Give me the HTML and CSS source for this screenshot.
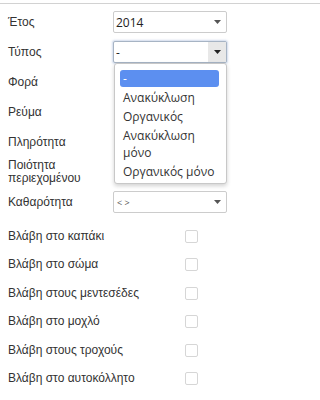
FILE: index.html
```
<!DOCTYPE html>
<html lang="el">
<head>
<meta charset="utf-8">
<title>Φίλτρα</title>
<link rel="stylesheet" href="styles.css">
</head>
<body>
<div class="topline"></div>
<div class="form">
  <div class="row">
    <div class="label">Έτος</div>
    <div class="select"><span class="value">2014</span><span class="arrow"><svg width="7" height="4" viewBox="0 0 7 4"><path d="M0 0h7L3.5 4z" fill="#555"/></svg></span></div>
  </div>
  <div class="row">
    <div class="label">Τύπος</div>
    <div class="select focus"><span class="value">-</span><span class="arrow"><svg width="7" height="4" viewBox="0 0 7 4"><path d="M0 0h7L3.5 4z" fill="#222"/></svg></span></div>
  </div>
  <div class="row"><div class="label">Φορά</div></div>
  <div class="row"><div class="label">Ρεύμα</div></div>
  <div class="row"><div class="label">Πληρότητα</div></div>
  <div class="row"><div class="label">Ποιότητα περιεχομένου</div></div>
  <div class="row">
    <div class="label">Καθαρότητα</div>
    <div class="select"><span class="value small">&lt; &gt;</span><span class="arrow"><svg width="7" height="4" viewBox="0 0 7 4"><path d="M0 0h7L3.5 4z" fill="#555"/></svg></span></div>
  </div>
  <div class="checks">
    <label class="crow"><span class="label">Βλάβη στο καπάκι</span><input type="checkbox" class="box"></label>
    <label class="crow"><span class="label">Βλάβη στο σώμα</span><input type="checkbox" class="box"></label>
    <label class="crow"><span class="label">Βλάβη στους μεντεσέδες</span><input type="checkbox" class="box"></label>
    <label class="crow"><span class="label">Βλάβη στο μοχλό</span><input type="checkbox" class="box"></label>
    <label class="crow"><span class="label">Βλάβη στους τροχούς</span><input type="checkbox" class="box"></label>
    <label class="crow"><span class="label">Βλάβη στο αυτοκόλλητο</span><input type="checkbox" class="box"></label>
  </div>
</div>
<ul class="dropdown">
  <li class="item active">-</li>
  <li class="item">Ανακύκλωση</li>
  <li class="item">Οργανικός</li>
  <li class="item">Ανακύκλωση μόνο</li>
  <li class="item">Οργανικός μόνο</li>
</ul>
</body>
</html>
```
FILE: styles.css
```
html, body {
  margin: 0;
  padding: 0;
  background: #fff;
}
body {
  font-family: "Liberation Sans", Arial, sans-serif;
  font-size: 12px;
  color: #333;
  position: relative;
}
.topline {
  margin-top: 3px;
  border-top: 1px solid #d2d2d2;
}
.form {
  padding: 3px 8px 0 8px;
}
.row {
  display: grid;
  grid-template-columns: 105px 114px;
  align-items: center;
  height: 30px;
}
.label {
  line-height: 13px;
  color: #333;
}
.select {
  box-sizing: border-box;
  height: 22px;
  border: 1px solid #ccc;
  border-radius: 2px;
  background: #fff;
  display: flex;
  align-items: center;
  justify-content: space-between;
  font-family: "Open Sans", sans-serif;
  font-size: 12px;
  color: #222;
}
.value {
  padding-left: 2px;
}
.value.small {
  font-size: 9px;
  color: #555;
  padding-left: 3px;
}
.arrow {
  width: 18px;
  height: 100%;
  display: flex;
  align-items: center;
  justify-content: center;
}
.select.focus {
  border-color: #a7b4c4;
  box-shadow: 0 0 2px 1px rgba(120, 150, 200, 0.35);
}
.select.focus .arrow {
  background: #e8e8e8;
}
.checks {
  margin-top: 5px;
}
.crow {
  display: grid;
  grid-template-columns: 177px 13px;
  align-items: center;
  height: 28.5px;
}
.box {
  appearance: none;
  -webkit-appearance: none;
  margin: 0;
  width: 13px;
  height: 13px;
  box-sizing: border-box;
  border: 1px solid #d6d6d6;
  border-radius: 2px;
  background: #fff;
}
.dropdown {
  position: absolute;
  top: 63px;
  left: 114px;
  width: 113px;
  box-sizing: border-box;
  margin: 0;
  padding: 6px 7px 2px 5px;
  list-style: none;
  background: #fff;
  border: 1px solid #c8c8c8;
  border-radius: 3px;
  box-shadow: 0 2px 4px rgba(0, 0, 0, 0.18);
  font-family: "Open Sans", sans-serif;
  font-size: 12px;
  color: #333;
}
.item {
  padding: 1px 3px;
  line-height: 17px;
}
.item.active {
  background: #5c8ff0;
  color: #fff;
  border-radius: 3px;
  padding: 0 3px;
  margin-bottom: 1px;
}
```
